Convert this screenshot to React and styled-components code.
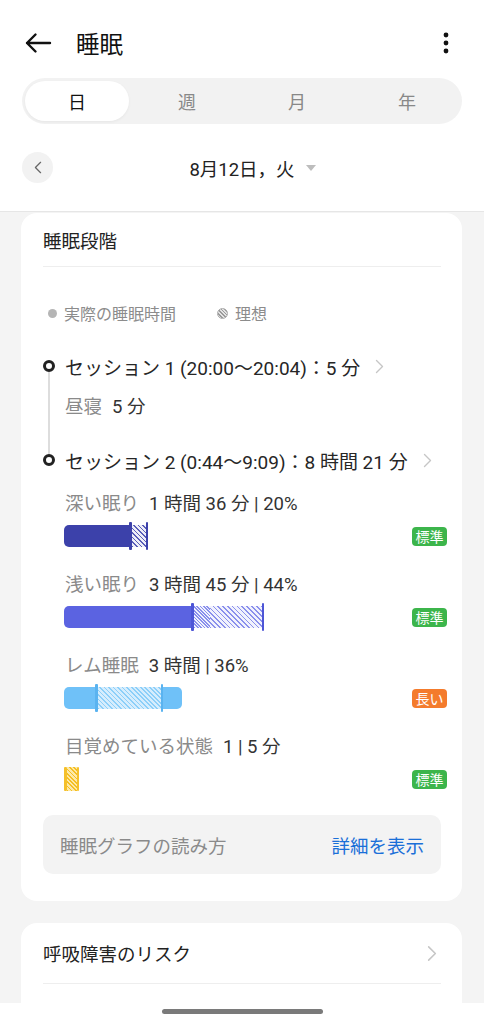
import React from "react";
import styled, { createGlobalStyle } from "styled-components";

const GlobalStyle = createGlobalStyle`
  body {
    margin: 0;
    background: #f4f4f4;
    font-family: Roboto, "Noto Sans CJK JP", sans-serif;
    color: #222;
  }
`;

const Page = styled.div`
  width: 484px;
  min-height: 1024px;
  background: #f4f4f4;
`;

const Header = styled.header`
  background: #fff;
  border-bottom: 1px solid #e6e6e6;
`;

const TopBar = styled.div`
  height: 78px;
  box-sizing: border-box;
  padding: 8px 33px 0 24px;
  display: flex;
  align-items: center;
`;

const Title = styled.h1`
  margin: 0 0 0 24px;
  flex: 1;
  font-size: 23.5px;
  font-weight: 400;
  color: #111;
`;

const Tabs = styled.div`
  margin: 0 22px;
  height: 46px;
  border-radius: 23px;
  background: #f2f2f2;
  display: grid;
  grid-template-columns: repeat(4, 1fr);
`;

const Tab = styled.div`
  margin: 3px;
  border-radius: 20px;
  display: flex;
  align-items: center;
  justify-content: center;
  font-size: 18px;
  color: ${(p) => (p.$active ? "#111" : "#888")};
  background: ${(p) => (p.$active ? "#fff" : "transparent")};
  box-shadow: ${(p) => (p.$active ? "0 1px 3px rgba(0,0,0,0.05)" : "none")};
`;

const DateRow = styled.div`
  height: 87px;
  padding: 0 22px;
  display: grid;
  grid-template-columns: 31px 1fr 31px;
  align-items: center;
`;

const RoundButton = styled.div`
  width: 31px;
  height: 31px;
  border-radius: 50%;
  background: #f2f2f2;
  display: flex;
  align-items: center;
  justify-content: center;
`;

const DateLabel = styled.div`
  display: flex;
  align-items: center;
  justify-content: center;
  gap: 11px;
  padding-left: 21px;
  font-size: 18.5px;
  color: #222;
`;

const Card = styled.section`
  margin: ${(p) => (p.$first ? "1px" : "22px")} 22px 0 21px;
  background: #fff;
  border-radius: 16px;
  padding: 0 21px ${(p) => p.$pb}px 22px;
`;

const CardTitle = styled.div`
  height: 53px;
  display: flex;
  align-items: center;
  border-bottom: 1px solid #eeeeee;
  font-size: 18.5px;
  color: #222;
`;

const Legend = styled.div`
  margin-top: 34px;
  height: 24px;
  display: flex;
  align-items: center;
  padding-left: 5px;
  font-size: 16px;
  color: #8c8c8c;
`;

const LegendItem = styled.span`
  display: flex;
  align-items: center;
  gap: 7px;
  margin-right: 41px;
`;

const LegendDot = styled.span`
  width: 9px;
  height: 9px;
  border-radius: 50%;
  background: ${(p) =>
    p.$hatch
      ? "repeating-linear-gradient(45deg, #9a9a9a 0 1.2px, #e4e4e4 1.2px 2.6px)"
      : "#b5b5b5"};
  border: ${(p) => (p.$hatch ? "0.5px solid #aaa" : "none")};
`;

const Timeline = styled.div`
  margin-top: 27px;
`;

const Session = styled.div`
  display: flex;
  gap: 10px;
`;

const Rail = styled.div`
  width: 12px;
  display: flex;
  flex-direction: column;
  align-items: center;
`;

const RailLine = styled.div`
  width: 2px;
  background: ${(p) => (p.$hidden ? "transparent" : "#dddddd")};
  height: ${(p) => (p.$fill ? "auto" : "8px")};
  flex: ${(p) => (p.$fill ? 1 : "none")};
`;

const Dot = styled.div`
  width: 12px;
  height: 12px;
  box-sizing: border-box;
  border: 3px solid #222;
  border-radius: 50%;
`;

const SessionBody = styled.div`
  flex: 1;
  padding-bottom: ${(p) => p.$pb}px;
`;

const SessionHead = styled.div`
  height: 28px;
  display: flex;
  align-items: center;
  gap: 15px;
  font-size: 19px;
  color: #262626;
`;

const Line = styled.div`
  margin-top: ${(p) => p.$mt}px;
  height: 24px;
  line-height: 24px;
  font-size: 18.5px;
  color: #333;
  white-space: nowrap;
`;

const Muted = styled.span`
  color: #8a8a8a;
  margin-right: 10px;
`;

const Stages = styled.div`
  padding-top: 18px;
  display: flex;
  flex-direction: column;
  gap: 23px;
`;

const BarRow = styled.div`
  margin-top: 6px;
  height: 28px;
  display: flex;
  align-items: center;
  justify-content: space-between;
`;

const Bar = styled.div`
  display: flex;
  align-items: center;
  margin-left: -1px;
`;

const Solid = styled.div`
  width: ${(p) => p.$w}px;
  height: 22px;
  background: ${(p) => p.$c};
  border-radius: ${(p) => p.$r};
`;

const Hatch = styled.div`
  width: ${(p) => p.$w}px;
  height: ${(p) => p.$h || 22}px;
  background: repeating-linear-gradient(
    45deg,
    ${(p) => p.$c} 0 1.2px,
    ${(p) => p.$bg} 1.2px ${(p) => p.$step}px
  );
`;

const Marker = styled.div`
  width: 2.5px;
  height: ${(p) => p.$h || 28}px;
  border-radius: 1px;
  background: ${(p) => p.$c};
`;

const Badge = styled.span`
  margin-right: -6px;
  width: 35px;
  height: 19px;
  border-radius: 4px;
  background: ${(p) => p.$c};
  color: #fff;
  font-size: 14px;
  display: flex;
  align-items: center;
  justify-content: center;
`;

const InfoBox = styled.div`
  margin-top: 22px;
  height: 59px;
  border-radius: 10px;
  background: #f3f3f3;
  padding: 0 17px;
  display: flex;
  align-items: center;
  justify-content: space-between;
  font-size: 18.5px;
  color: #8a8a8a;
`;

const LinkText = styled.span`
  color: #1a6fd8;
`;

const ListRow = styled.div`
  height: 60px;
  display: flex;
  align-items: center;
  justify-content: space-between;
  padding-right: 4px;
  border-bottom: 1px solid #eeeeee;
  font-size: 18.5px;
  color: #222;
`;

const NavBar = styled.div`
  position: fixed;
  left: 0;
  bottom: 0;
  width: 484px;
  height: 21px;
  background: #fff;
  display: flex;
  justify-content: center;
  padding-top: 6px;
  box-sizing: border-box;
`;

const Handle = styled.div`
  width: 161px;
  height: 5px;
  border-radius: 3px;
  background: #7a7a7a;
`;

const Chevron = ({ dir = "right", color = "#c6c6c6", w = 9, h = 15 }) => (
  <svg width={w} height={h} viewBox="0 0 9 15">
    <polyline
      points={dir === "right" ? "1.5,1.5 7.5,7.5 1.5,13.5" : "7.5,1.5 1.5,7.5 7.5,13.5"}
      fill="none"
      stroke={color}
      strokeWidth="1.4"
      strokeLinecap="round"
      strokeLinejoin="round"
    />
  </svg>
);

const stages = [
  {
    name: "深い眠り",
    value: "1 時間 36 分 | 20%",
    badge: "標準",
    badgeColor: "#3cb54b",
    parts: [
      { t: "solid", w: 65, r: "5px 0 0 5px" },
      { t: "marker" },
      { t: "hatch", w: 14 },
      { t: "marker" },
    ],
    c: "#3c41aa",
    stripe: "#5a5fb9",
    mark: "#3c41aa",
    bg: "#eeeef8",
    step: 3.2,
  },
  {
    name: "浅い眠り",
    value: "3 時間 45 分 | 44%",
    badge: "標準",
    badgeColor: "#3cb54b",
    parts: [
      { t: "solid", w: 127, r: "5px 0 0 5px" },
      { t: "marker" },
      { t: "hatch", w: 16, step: 2.4 },
      { t: "hatch", w: 52 },
      { t: "marker" },
    ],
    c: "#5b63e1",
    stripe: "#8a90ec",
    mark: "#4d55d6",
    bg: "#f1f2fd",
    step: 3.4,
  },
  {
    name: "レム睡眠",
    value: "3 時間 | 36%",
    badge: "長い",
    badgeColor: "#f47b2c",
    parts: [
      { t: "solid", w: 31, r: "5px 0 0 5px" },
      { t: "marker" },
      { t: "hatch", w: 63 },
      { t: "marker" },
      { t: "solid", w: 19, r: "0 5px 5px 0" },
    ],
    c: "#6fc1f8",
    stripe: "#8ccff9",
    mark: "#5ab3f0",
    bg: "#d6edfd",
    step: 3.2,
  },
  {
    name: "目覚めている状態",
    value: "1 | 5 分",
    badge: "標準",
    badgeColor: "#3cb54b",
    parts: [{ t: "marker", h: 24 }, { t: "hatch", w: 10, h: 24 }, { t: "marker", h: 24 }],
    c: "#f5bf22",
    stripe: "#f5bf22",
    mark: "#f5c02a",
    bg: "#fde9a8",
    step: 3.0,
  },
];

const StageBar = ({ s }) => (
  <Bar>
    {s.parts.map((p, i) => {
      if (p.t === "solid") return <Solid key={i} $w={p.w} $c={s.c} $r={p.r} />;
      if (p.t === "marker") return <Marker key={i} $c={s.mark} $h={p.h} />;
      return (
        <Hatch key={i} $w={p.w} $h={p.h} $c={s.stripe} $bg={s.bg} $step={p.step || s.step} />
      );
    })}
  </Bar>
);

export default function App() {
  return (
    <Page>
      <GlobalStyle />
      <Header>
        <TopBar>
          <svg width="28" height="22" viewBox="0 0 28 22">
            <path
              d="M26 11H3M11.5 2.5L3 11l8.5 8.5"
              fill="none"
              stroke="#111"
              strokeWidth="2.4"
              strokeLinecap="round"
              strokeLinejoin="round"
            />
          </svg>
          <Title>睡眠</Title>
          <svg width="10" height="24" viewBox="0 0 10 24">
            <circle cx="5" cy="4" r="2.4" fill="#111" />
            <circle cx="5" cy="12" r="2.4" fill="#111" />
            <circle cx="5" cy="20" r="2.4" fill="#111" />
          </svg>
        </TopBar>
        <Tabs>
          <Tab $active>日</Tab>
          <Tab>週</Tab>
          <Tab>月</Tab>
          <Tab>年</Tab>
        </Tabs>
        <DateRow>
          <RoundButton>
            <Chevron dir="left" color="#666" w={8} h={13} />
          </RoundButton>
          <DateLabel>
            <span>8月12日，火</span>
            <svg width="10" height="6" viewBox="0 0 10 6">
              <path d="M0 0h10L5 6z" fill="#bdbdbd" />
            </svg>
          </DateLabel>
          <span />
        </DateRow>
      </Header>

      <Card $first $pb={27}>
        <CardTitle>睡眠段階</CardTitle>
        <Legend>
          <LegendItem>
            <LegendDot />
            実際の睡眠時間
          </LegendItem>
          <LegendItem>
            <LegendDot $hatch />
            理想
          </LegendItem>
        </Legend>

        <Timeline>
          <Session>
            <Rail>
              <RailLine $hidden />
              <Dot />
              <RailLine $fill />
            </Rail>
            <SessionBody $pb={27}>
              <SessionHead>
                <span>セッション 1 (20:00〜20:04)：5 分</span>
                <Chevron />
              </SessionHead>
              <Line $mt={15}>
                <Muted>昼寝</Muted>5 分
              </Line>
            </SessionBody>
          </Session>
          <Session>
            <Rail>
              <RailLine />
              <Dot />
            </Rail>
            <SessionBody $pb={0}>
              <SessionHead>
                <span>セッション 2 (0:44〜9:09)：8 時間 21 分</span>
                <Chevron />
              </SessionHead>
              <Stages>
                {stages.map((s) => (
                  <div key={s.name}>
                    <Line $mt={0}>
                      <Muted>{s.name}</Muted>
                      {s.value}
                    </Line>
                    <BarRow>
                      <StageBar s={s} />
                      <Badge $c={s.badgeColor}>{s.badge}</Badge>
                    </BarRow>
                  </div>
                ))}
              </Stages>
            </SessionBody>
          </Session>
        </Timeline>

        <InfoBox>
          <span>睡眠グラフの読み方</span>
          <LinkText>詳細を表示</LinkText>
        </InfoBox>
      </Card>

      <Card $pb={60}>
        <ListRow>
          <span>呼吸障害のリスク</span>
          <Chevron w={10} h={17} />
        </ListRow>
      </Card>

      <NavBar>
        <Handle />
      </NavBar>
    </Page>
  );
}
